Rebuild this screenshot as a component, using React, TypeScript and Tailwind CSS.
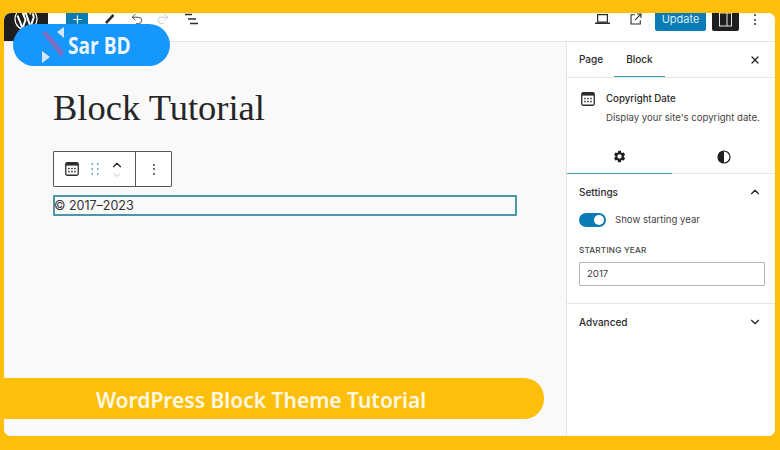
import { ChevronDown, ChevronUp, Plus, Redo2, Undo2, X } from "lucide-react";

function CalendarIcon({ size = 14 }: { size?: number }) {
    return (
        <svg width={size} height={size} viewBox="0 0 14 14" fill="none">
            <rect x="0.75" y="0.75" width="12.5" height="12.5" rx="1.5" stroke="#2c2c2c" strokeWidth="1.3" />
            <rect x="1" y="1" width="12" height="2.6" fill="#2c2c2c" />
            <g fill="#2c2c2c">
                <rect x="3.2" y="5.8" width="1.5" height="1.5" />
                <rect x="6.2" y="5.8" width="1.5" height="1.5" />
                <rect x="9.2" y="5.8" width="1.5" height="1.5" />
                <rect x="3.2" y="8.8" width="1.5" height="1.5" />
                <rect x="6.2" y="8.8" width="1.5" height="1.5" />
                <rect x="9.2" y="8.8" width="1.5" height="1.5" />
            </g>
        </svg>
    );
}

function WpLogo() {
    return (
        <svg width="24" height="24" viewBox="0 0 24 24" fill="none">
            <circle cx="12" cy="12" r="11" stroke="#fff" strokeWidth="1.2" />
            <path d="M3.5 8.5 8.5 21 11.5 13 9 6.5M8 6.5h5M12 6.5 16.5 20l3-9c.6-2-.2-3.2-1-4.5M15.5 6.5h1.5" stroke="#fff" strokeWidth="2" />
        </svg>
    );
}

function PencilStroke() {
    return (
        <svg width="12" height="12" viewBox="0 0 12 12" fill="none" stroke="#2c2c2c">
            <path d="M2 10 9.5 1.8" strokeWidth="2.6" />
            <path d="M1 11.5h3.5" strokeWidth="1" />
        </svg>
    );
}

function LaptopIcon() {
    return (
        <svg width="15" height="10" viewBox="0 0 15 10" fill="none" stroke="#2c2c2c" strokeWidth="1.2">
            <path d="M2.6 0.6h9.8v7.5H2.6z" />
            <path d="M0 9.2h15" strokeWidth="1.5" />
        </svg>
    );
}

function ExternalIcon() {
    return (
        <svg width="12" height="12" viewBox="0 0 14 14" fill="none" stroke="#2c2c2c" strokeWidth="1.3">
            <path d="M5.5 2H1.2v10.8H12V8.5" />
            <path d="M6 8 12.5 1.5M8.2 1.2h4.6v4.6" />
        </svg>
    );
}

function ListViewIcon() {
    return (
        <svg width="13" height="12" viewBox="0 0 13 12" fill="none" stroke="#2c2c2c" strokeWidth="1.4">
            <path d="M0 1.5h7M3 6h8M5 10.5h8" />
        </svg>
    );
}

function SidebarIcon() {
    return (
        <svg width="13" height="14" viewBox="0 0 13 14" fill="none" stroke="#e8e8e8" strokeWidth="1">
            <rect x="0.5" y="0" width="12" height="13" />
            <path d="M8 0v13" />
        </svg>
    );
}

function GearIcon() {
    return (
        <svg width="13" height="13" viewBox="0 0 24 24" fill="none">
            <path
                fillRule="evenodd"
                clipRule="evenodd"
                fill="#1e1e1e"
                d="M9.5 1.5h5l.7 3.2 1.6.9 3.1-1 2.5 4.3-2.4 2.2v1.8l2.4 2.2-2.5 4.3-3.1-1-1.6.9-.7 3.2h-5l-.7-3.2-1.6-.9-3.1 1L2 14.9l2.4-2.2v-1.8L2 8.9l2.5-4.3 3.1 1 1.6-.9zM12 8a4 4 0 1 0 0 8 4 4 0 0 0 0-8z"
            />
        </svg>
    );
}

function ContrastIcon() {
    return (
        <svg width="14" height="14" viewBox="0 0 14 14" fill="none">
            <circle cx="7" cy="7" r="6" stroke="#1e1e1e" strokeWidth="1.2" />
            <path d="M7 1a6 6 0 0 0 0 12z" fill="#1e1e1e" />
        </svg>
    );
}

function DragDots() {
    return (
        <svg width="8" height="12" viewBox="0 0 8 12" fill="#3f8db8">
            {[1, 6, 11].map((y) => (
                <g key={y}>
                    <rect x="0.5" y={y - 0.75} width="1.5" height="1.5" />
                    <rect x="6" y={y - 0.75} width="1.5" height="1.5" />
                </g>
            ))}
        </svg>
    );
}

function VerticalDots({ color = "#2c2c2c" }: { color?: string }) {
    return (
        <div className="flex flex-col gap-[2.5px]">
            {[0, 1, 2].map((i) => (
                <span key={i} className="w-[2px] h-[2px] rounded-full" style={{ backgroundColor: color }} />
            ))}
        </div>
    );
}

function SarLogo() {
    return (
        <svg width="24" height="36" viewBox="0 0 24 36" fill="none">
            <path d="M1 6 L5 4 L23 25 L20 30 Z" fill="#7f6fc4" />
            <path d="M23 0 L23 11 L16 5 Z" fill="#d6e4f5" />
            <path d="M1 24 L1 36 L9 30 Z" fill="#d6e4f5" />
        </svg>
    );
}

function TopBar() {
    return (
        <header className="h-[29px] shrink-0 flex items-center bg-white border-b border-[#e4e4e4] overflow-hidden">
            <div className="w-[44px] h-full bg-[#1e1e1e] flex items-start justify-center">
                <div className="-mt-[6px]">
                    <WpLogo />
                </div>
            </div>
            <div className="ml-[18px] w-[22px] h-[12px] self-start bg-[#0a7cb5] flex items-center justify-center">
                <Plus size={13} color="#fff" strokeWidth={2} />
            </div>
            <div className="ml-[16px] self-start flex items-center h-[12px]">
                <PencilStroke />
                <Undo2 size={14} color="#444" strokeWidth={1.6} className="ml-[14px]" />
                <Redo2 size={14} color="#c4c4c4" strokeWidth={1.6} className="ml-[12px]" />
                <div className="ml-[15px]">
                    <ListViewIcon />
                </div>
            </div>
            <div className="ml-auto self-start flex items-start h-[18px] pr-[19px]">
                <div className="mt-[1px]">
                    <LaptopIcon />
                </div>
                <div className="ml-[20px]">
                    <ExternalIcon />
                </div>
                <div className="ml-[13px] w-[51px] h-[18px] pb-[6px] bg-[#0a7cb5] rounded-b-[2px] flex items-center justify-center text-[11px] leading-none text-[#d6ecf7] font-['Inter',sans-serif]">
                    Update
                </div>
                <div className="ml-[6px] w-[27px] h-[18px] bg-[#1e1e1e] rounded-b-[2px] flex items-start justify-center">
                    <SidebarIcon />
                </div>
                <div className="ml-[15px] mt-[1px]">
                    <VerticalDots />
                </div>
            </div>
        </header>
    );
}

function BlockToolbar() {
    return (
        <div className="w-[119px] h-[36px] flex items-center bg-white border border-[#555] rounded-[1px]">
            <div className="w-[82px] h-full flex items-center border-r border-[#555] pl-[11px]">
                <CalendarIcon />
                <div className="ml-[12px]">
                    <DragDots />
                </div>
                <div className="ml-[11px] flex flex-col items-center">
                    <ChevronUp size={14} color="#222" strokeWidth={2} className="-mb-[3px]" />
                    <ChevronDown size={12} color="#b9b9b9" strokeWidth={1.6} />
                </div>
            </div>
            <div className="flex-1 flex justify-center">
                <VerticalDots color="#444" />
            </div>
        </div>
    );
}

function Editor() {
    return (
        <main className="flex-1 bg-[#f9f9f9] border-r border-[#e4e4e4] pl-[49px] pt-[44px]">
            <h1 className="font-['Liberation_Serif',serif] text-[36.5px] leading-[44px] text-[#262626]">Block Tutorial</h1>
            <div className="mt-[21px]">
                <BlockToolbar />
            </div>
            <div className="mt-[8px] w-[464px] h-[21px] flex items-center pt-[1px] border-2 border-[#4b97a8] rounded-[1px] text-[12.5px] text-[#333] font-['Inter',sans-serif]">
                <span className="-ml-[1px]">© 2017–2023</span>
            </div>
        </main>
    );
}

function Sidebar() {
    return (
        <aside className="w-[208px] shrink-0 bg-white flex flex-col text-[#2a2a2a] font-['Inter',sans-serif]">
            <div className="h-[36px] flex items-center border-b border-[#e6e6e6] pl-[12px] pr-[14px] text-[10px] font-medium">
                <span>Page</span>
                <span className="ml-[23px] relative h-full flex items-center">
                    Block
                    <span className="absolute left-[-12px] right-[-12px] bottom-0 h-[1.5px] bg-[#3f9bb8]" />
                </span>
                <X size={12} color="#222" strokeWidth={2.4} className="ml-auto" />
            </div>
            <div className="flex pl-[14px] pt-[14px] h-[64px]">
                <CalendarIcon />
                <div className="ml-[11px]">
                    <p className="text-[9.7px] leading-[14px] font-medium">Copyright Date</p>
                    <p className="mt-[5px] text-[9.6px] leading-[14px] text-[#444] whitespace-nowrap">Display your site's copyright date.</p>
                </div>
            </div>
            <div className="h-[32px] flex border-b border-[#e6e6e6]">
                <div className="w-[105px] flex justify-center pt-[8px] border-b-[1.5px] border-[#3f9bb8] -mb-[1px]">
                    <GearIcon />
                </div>
                <div className="flex-1 flex justify-center pt-[8px]">
                    <ContrastIcon />
                </div>
            </div>
            <div className="h-[130px] border-b border-[#e6e6e6] px-[12px] pt-[11px]">
                <div className="flex items-center justify-between h-[14px] text-[10px] font-medium pr-[1px]">
                    Settings
                    <ChevronUp size={14} color="#222" strokeWidth={2} />
                </div>
                <div className="mt-[14px] flex items-center h-[14px] text-[9.6px]">
                    <div className="w-[27px] h-[14px] rounded-full bg-[#0a7cb5] flex items-center justify-end pr-[2px]">
                        <span className="w-[10px] h-[10px] rounded-full bg-white" />
                    </div>
                    <span className="ml-[9px] text-[#444]">Show starting year</span>
                </div>
                <p className="mt-[17px] text-[8.2px] leading-[12px] font-medium text-[#444] tracking-[0.2px]">STARTING YEAR</p>
                <div className="mt-[6px] w-[186px] h-[24px] border border-[#b5b5b5] rounded-[1px] flex items-center pl-[7px] text-[9.6px] text-[#444]">
                    2017
                </div>
            </div>
            <div className="flex items-center justify-between h-[36px] pl-[12px] pr-[13px] text-[10px] font-medium">
                Advanced
                <ChevronDown size={14} color="#222" strokeWidth={2} />
            </div>
        </aside>
    );
}

export default function App() {
    return (
        <div className="relative w-[780px] h-[450px] overflow-hidden bg-[#fdbf0c] pt-[13px] pl-[4px] pr-[5px] pb-[14px]">
            <div className="w-full h-full flex flex-col overflow-hidden rounded-[7px] bg-white">
                <TopBar />
                <div className="flex-1 flex min-h-0">
                    <Editor />
                    <Sidebar />
                </div>
            </div>

            <div className="absolute left-[13px] top-[24px] w-[157px] h-[42px] rounded-[21px] bg-[#1597fb] flex items-center pl-[28px] text-[#eef6fd] font-['Open_Sans',sans-serif]">
                <SarLogo />
                <span className="ml-[3px] text-[23px] leading-none scale-x-[0.83] origin-left whitespace-nowrap font-bold">Sar BD</span>
            </div>

            <div className="absolute left-0 top-[378px] w-[544px] h-[41px] rounded-r-[20px] bg-[#fdbf0c] flex items-center pl-[96px] pt-[4px]">
                <span className="text-[21px] font-semibold text-[#fff8e4] font-['Noto_Sans',sans-serif] whitespace-nowrap">WordPress Block Theme Tutorial</span>
            </div>
        </div>
    );
}
